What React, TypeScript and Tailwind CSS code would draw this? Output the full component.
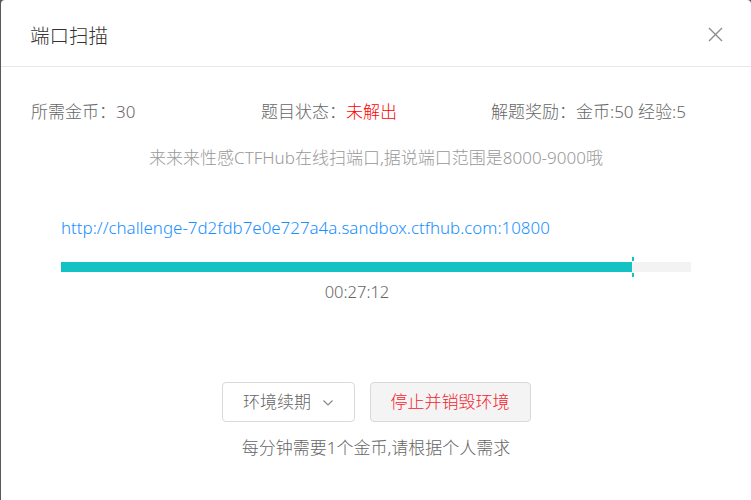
import React from "react";

const font = { fontFamily: '"Segoe UI", "Noto Sans", "Noto Sans CJK SC", sans-serif' };

export default function App() {
  return (
    <div className="w-[751px] h-[500px] bg-[#595959] overflow-hidden font-light" style={font}>
      <div className="ml-[1px] w-[750px] h-[500px] bg-white rounded-t-[4px] flex flex-col">
        <div className="h-[67px] border-b border-[#e8e8e8] flex items-center justify-between pl-[29px] pr-[28px] shrink-0">
          <div className="text-[19.5px] text-[#333] leading-none mt-[5px]">端口扫描</div>
          <svg width="15" height="15" viewBox="0 0 15 15" className="mt-[3px]">
            <path d="M1 1L14 14M14 1L1 14" stroke="#8c8c8c" strokeWidth="1.4" />
          </svg>
        </div>
        <div className="grid grid-cols-3 px-[30px] mt-[34px] text-[17px] text-[#666] leading-[22px]">
          <div>所需金币：30</div>
          <div>
            题目状态：<span className="text-[#ff0000]">未解出</span>
          </div>
          <div>解题奖励：金币:50 经验:5</div>
        </div>
        <div className="text-center text-[17px] text-[#999] mt-[24px] leading-[22px]">
          来来来性感CTFHub在线扫端口,据说端口范围是8000-9000哦
        </div>
        <div className="px-[60px] mt-[48px]">
          <div className="text-[16.9px] text-[#1890ff] leading-[22px]">
            http://challenge-7d2fdb7e0e727a4a.sandbox.ctfhub.com:10800
          </div>
          <div className="mt-[23px] relative h-[10px] bg-[#f3f3f3]">
            <div className="h-full bg-[#13c2c2]" style={{ width: "571px" }} />
            <div className="absolute left-[571px] top-[-5px] w-[2px] h-[4px] bg-[#13c2c2]" />
            <div className="absolute left-[571px] top-[11px] w-[2px] h-[4px] bg-[#13c2c2]" />
          </div>
          <div className="text-center text-[16.5px] text-[#666] mt-[9px] leading-[22px] pr-[38px]">00:27:12</div>
        </div>
        <div className="flex justify-center gap-[15px] mt-[79px]">
          <div className="w-[133px] h-[40px] border border-[#d9d9d9] rounded-[4px] flex items-center justify-center gap-[12px] text-[17px] text-[#666]">
            <span>环境续期</span>
            <svg width="10" height="6" viewBox="0 0 10 6" className="mt-[2px]">
              <path d="M0.5 0.5L5 5L9.5 0.5" stroke="#888" strokeWidth="1.2" fill="none" />
            </svg>
          </div>
          <div className="w-[161px] h-[40px] border border-[#d9d9d9] bg-[#f4f4f4] rounded-[4px] flex items-center justify-center text-[17px] text-[#f5222d]">
            停止并销毁环境
          </div>
        </div>
        <div className="text-center text-[17px] text-[#666] mt-[15px] leading-[22px]">每分钟需要1个金币,请根据个人需求</div>
      </div>
    </div>
  );
}
